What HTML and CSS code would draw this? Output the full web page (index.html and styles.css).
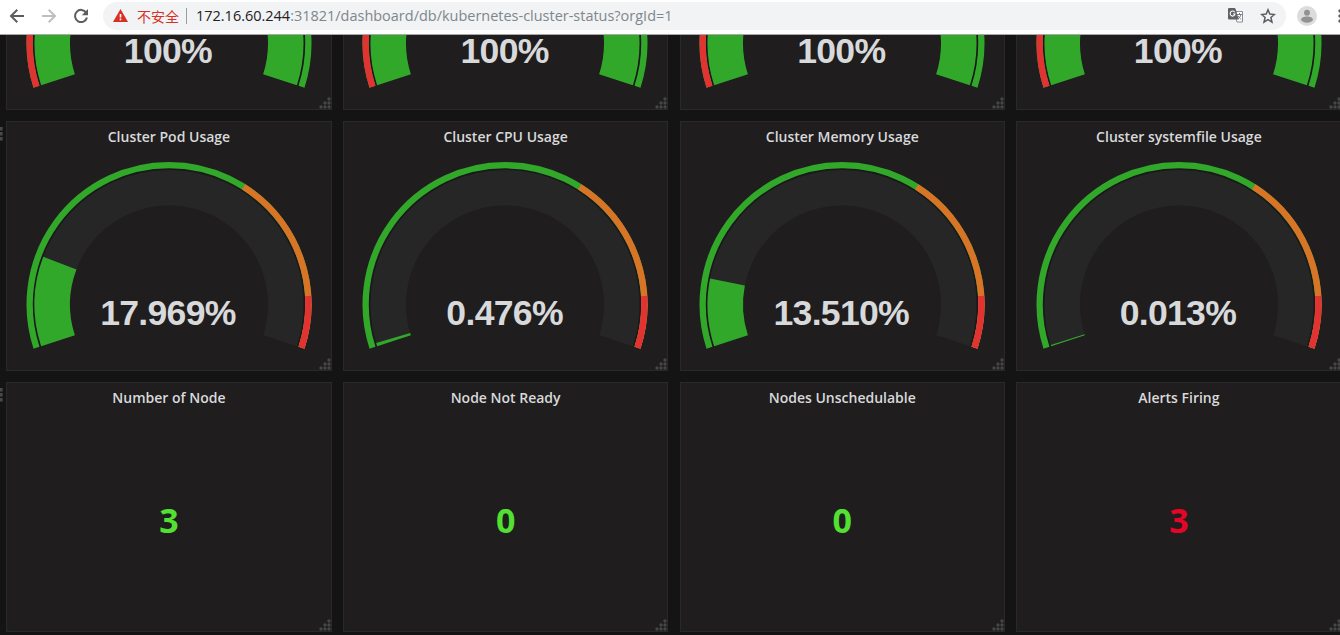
FILE: index.html
```html
<!DOCTYPE html>
<html lang="en">
<head>
<meta charset="utf-8">
<title>Kubernetes cluster status</title>
<link rel="stylesheet" href="styles.css">
</head>
<body>
<svg class="defs" aria-hidden="true">
  <symbol id="grip" viewBox="0 0 12 12">
    <circle cx="10" cy="2" r="1.7"/><circle cx="6" cy="6" r="1.7"/><circle cx="10" cy="6" r="1.7"/>
    <circle cx="2" cy="10" r="1.7"/><circle cx="6" cy="10" r="1.7"/><circle cx="10" cy="10" r="1.7"/>
  </symbol>
  <symbol id="track" viewBox="0 0 286 190">
    <path class="gap" d="M13.6 184.7A136 136 0 1 1 272.4 184.7"/>
    <path class="well" d="M32 178.7A116.75 116.75 0 1 1 254 178.7"/>
  </symbol>
  <symbol id="usage" viewBox="0 0 286 190">
    <use href="#track"/>
    <path class="ring green" pathLength="100" d="M10.5 185.7A139.35 139.35 0 1 1 275.5 185.7"/>
    <path class="ring orange" pathLength="100" stroke-dasharray="0 65 35" d="M10.5 185.7A139.35 139.35 0 1 1 275.5 185.7"/>
    <path class="ring red" pathLength="100" stroke-dasharray="0 90 10" d="M10.5 185.7A139.35 139.35 0 1 1 275.5 185.7"/>
  </symbol>
  <symbol id="health" viewBox="0 0 286 190">
    <use href="#track"/>
    <path class="ring green" pathLength="100" d="M10.5 185.7A139.35 139.35 0 1 1 275.5 185.7"/>
    <path class="ring red" pathLength="100" stroke-dasharray="90 10" d="M10.5 185.7A139.35 139.35 0 1 1 275.5 185.7"/>
    <path class="bar" d="M32 178.7A116.75 116.75 0 1 1 254 178.7"/>
  </symbol>
</svg>

<header class="toolbar">
  <svg class="nav" viewBox="0 0 16 16"><path d="M15 8H2.5M8.3 1.8L2 8l6.3 6.2"/></svg>
  <svg class="nav off" viewBox="0 0 16 16"><path d="M1 8h12.5M7.7 1.8L14 8l-6.3 6.2"/></svg>
  <svg class="nav" viewBox="0 0 16 16"><path d="M13.2 4.6A6.1 6.1 0 1 0 14 9.6"/><path class="solid" d="M15 1v6.2H8.8z"/></svg>
  <div class="address">
    <svg class="warn" viewBox="0 0 15 13"><path fill="#d93025" d="M7.5 0L15 13H0z"/><path fill="#fff" d="M6.7 5h1.6v3.4H6.7zM6.7 9.6h1.6v1.6H6.7z"/></svg>
    <span class="insecure">不安全</span>
    <span class="divider"></span>
    <span class="url"><b>172.16.60.244</b>:31821/dashboard/db/kubernetes-cluster-status?orgId=1</span>
    <svg class="translate" viewBox="0 0 15 15"><path fill="#fff" stroke="#8a8d91" d="M6 3.5h8.500v10.500H9z"/><path fill="#5f6368" d="M1 0h6l1 2 2.700 9.500H1a1 1 0 0 1-1-1V1a1 1 0 0 1 1-1z"/><path fill="none" stroke="#fff" stroke-width="1.100" d="M6.800 4.300A2.500 2.500 0 1 0 7.100 6H5"/><path fill="none" stroke="#777b80" d="M9 6.500h5M11.500 5v1.500M13 6.500c-.5 2-1.600 3.500-3 4.500M10.300 8c.7 1.500 1.500 2.500 3 3.300"/></svg>
    <svg class="star" viewBox="0 0 16 16"><path d="M8 1.800l1.800 4.300 4.600.4-3.500 3 1.100 4.600L8 11.700 4 14.100l1.100-4.600-3.500-3 4.600-.4z"/></svg>
  </div>
  <svg class="avatar" viewBox="0 0 20 20"><circle cx="10" cy="10" r="10" fill="#dcdcdc"/><circle cx="10" cy="6.700" r="3" fill="#929292"/><path fill="#929292" d="M4 14c0-2.500 3-3.500 6-3.500s6 1 6 3.500c-1.500 1.800-3.500 2.700-6 2.700S5.500 15.800 4 14z"/></svg>
  <svg class="more" viewBox="0 0 4 14"><circle cx="2" cy="2" r="1.700"/><circle cx="2" cy="7" r="1.700"/><circle cx="2" cy="12" r="1.700"/></svg>
</header>

<main class="dashboard">
  <section class="row first">
    <article class="panel"><h2></h2><svg class="gauge"><use href="#health"/></svg><p class="reading">100%</p><svg class="grip"><use href="#grip"/></svg></article>
    <article class="panel"><h2></h2><svg class="gauge"><use href="#health"/></svg><p class="reading">100%</p><svg class="grip"><use href="#grip"/></svg></article>
    <article class="panel"><h2></h2><svg class="gauge"><use href="#health"/></svg><p class="reading">100%</p><svg class="grip"><use href="#grip"/></svg></article>
    <article class="panel"><h2></h2><svg class="gauge"><use href="#health"/></svg><p class="reading">100%</p><svg class="grip"><use href="#grip"/></svg></article>
  </section>
  <section class="row">
    <svg class="handle" viewBox="0 0 3 14"><path d="M0 0h2.600v3.600H0zM0 5h2.600v3.600H0zM0 10h2.600v3.600H0z"/></svg>
    <article class="panel"><h2>Cluster Pod Usage</h2><svg class="gauge"><use href="#usage"/><path class="bar" pathLength="100" stroke-dasharray="17.969 100" d="M32 178.700A116.750 116.750 0 1 1 254 178.700"/></svg><p class="reading">17.969%</p><svg class="grip"><use href="#grip"/></svg></article>
    <article class="panel"><h2>Cluster CPU Usage</h2><svg class="gauge"><use href="#usage"/><path class="bar" pathLength="100" stroke-dasharray="0.65 100" d="M32 178.700A116.750 116.750 0 1 1 254 178.700"/></svg><p class="reading">0.476%</p><svg class="grip"><use href="#grip"/></svg></article>
    <article class="panel"><h2>Cluster Memory Usage</h2><svg class="gauge"><use href="#usage"/><path class="bar" pathLength="100" stroke-dasharray="13.510 100" d="M32 178.700A116.750 116.750 0 1 1 254 178.700"/></svg><p class="reading">13.510%</p><svg class="grip"><use href="#grip"/></svg></article>
    <article class="panel"><h2>Cluster systemfile Usage</h2><svg class="gauge"><use href="#usage"/><path class="bar" pathLength="100" stroke-dasharray="0.25 100" d="M32 178.700A116.750 116.750 0 1 1 254 178.700"/></svg><p class="reading">0.013%</p><svg class="grip"><use href="#grip"/></svg></article>
  </section>
  <section class="row">
    <svg class="handle" viewBox="0 0 3 14"><path d="M0 0h2.600v3.600H0zM0 5h2.600v3.600H0zM0 10h2.600v3.600H0z"/></svg>
    <article class="panel"><h2>Number of Node</h2><p class="stat">3</p><svg class="grip"><use href="#grip"/></svg></article>
    <article class="panel"><h2>Node Not Ready</h2><p class="stat">0</p><svg class="grip"><use href="#grip"/></svg></article>
    <article class="panel"><h2>Nodes Unschedulable</h2><p class="stat">0</p><svg class="grip"><use href="#grip"/></svg></article>
    <article class="panel"><h2>Alerts Firing</h2><p class="stat alert">3</p><svg class="grip"><use href="#grip"/></svg></article>
  </section>
</main>
</body>
</html>
```
FILE: styles.css
```css
* { box-sizing: border-box; }
body {
  margin: 0;
  height: 635px;
  display: flex;
  flex-direction: column;
  overflow: hidden;
  background: #141414;
  font-family: "Open Sans", "Noto Sans CJK SC", sans-serif;
}
h2, p { margin: 0; }
.defs { position: absolute; width: 0; height: 0; }

/* Browser toolbar */
.toolbar {
  flex: none;
  width: 1342px;
  height: 35px;
  padding: 0 0 3px 9px;
  display: flex;
  align-items: center;
  background: #fff;
  border-bottom: 1px solid #a8a8a8;
}
.nav { width: 16px; height: 16px; margin-right: 16px; fill: none; stroke: #5a5d61; stroke-width: 2; }
.nav.off { stroke: #bdbfc1; }
.nav .solid { fill: #5a5d61; stroke: none; }
.address {
  flex: none;
  width: 1183px;
  height: 28px;
  margin-left: -2px;
  padding: 0 10px 0 10px;
  display: flex;
  align-items: center;
  border-radius: 14px;
  background: #f1f3f4;
}
.warn { width: 15px; height: 13px; }
.insecure { width: 42px; margin-left: 9px; font: 14px/20px "Noto Sans CJK SC", sans-serif; color: #d93025; white-space: nowrap; }
.divider { width: 1px; height: 16px; margin: 0 9px 0 7px; background: #9a9da1; }
.url { font-size: 14.48px; line-height: 20px; color: #80868b; white-space: nowrap; }
.url b { font-weight: 400; color: #202124; }
.translate { width: 15px; height: 15px; margin-left: auto; }
.star { width: 16px; height: 16px; margin-left: 17px; fill: none; stroke: #5a5d61; stroke-width: 1.5; }
.avatar { flex: none; width: 20px; height: 20px; margin-left: 11px; }
.more { flex: none; width: 4px; height: 14px; margin-left: 21px; fill: #5a5d61; }

/* Dashboard */
.dashboard {
  flex: 1;
  min-height: 0;
  overflow: hidden;
}
.row {
  position: relative;
  width: 1341.6px;
  margin-bottom: 11px;
  padding-left: 6.3px;
  display: grid;
  grid-template-columns: repeat(4, 325.3px);
  column-gap: 11.37px;
}
.row.first { margin-top: -175px; }
.first .reading { margin-top: -54px; }
.handle { position: absolute; left: 0; top: 6px; width: 3px; height: 14px; fill: #4a4a4a; }
.panel {
  position: relative;
  height: 250px;
  display: flex;
  flex-direction: column;
  align-items: center;
  background: #1f1d1e;
  border: 1px solid #292929;
}
.panel h2 { height: 30px; font-size: 14px; font-weight: 600; line-height: 30px; color: #d8d9da; white-space: nowrap; }
.gauge { flex: none; width: 286px; height: 190px; margin: 9.7px 0.4px 0 0; }
.gauge path, symbol path { fill: none; }
.gap { stroke: #1a1919; stroke-width: 3; }
.well { stroke: #262626; stroke-width: 35.5; }
.bar { fill: none; stroke: #32a82b; stroke-width: 35.5; }
.ring { stroke-width: 6.3; }
.green { stroke: #32a82b; }
.orange { stroke: #d97426; }
.red { stroke: #e23333; }
.reading { margin: -53px 2px 0 0; font: bold 35.6px/28px "Liberation Sans", Arial, sans-serif; letter-spacing: -0.7px; color: #d8d9da; }
.stat { margin-top: 84px; font-size: 34px; font-weight: 700; line-height: 46px; color: #52e033; }
.stat.alert { color: #e60526; }
.grip { position: absolute; right: 0; bottom: 0; width: 12px; height: 12px; fill: #464646; }
```
